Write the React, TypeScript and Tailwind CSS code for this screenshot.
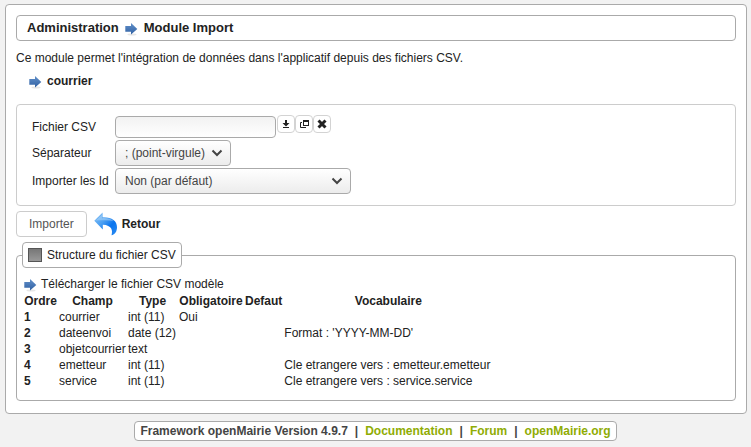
import { ReactNode } from "react";

function ArrowIcon() {
  return (
    <svg width="13" height="16" viewBox="0 0 13 16" className="shrink-0" aria-hidden="true">
      <defs>
        <linearGradient id="arrow-blue" x1="0" y1="0" x2="0" y2="1">
          <stop offset="0" stopColor="#6391ca" />
          <stop offset="1" stopColor="#2f60a2" />
        </linearGradient>
      </defs>
      <ellipse cx="7" cy="14.5" rx="4.5" ry="1" fill="#e6e6e6" />
      <path d="M0.3 6H6V3L12.3 9L6 14.6V11.8H0.3Z" fill="url(#arrow-blue)" />
    </svg>
  );
}

function BackIcon() {
  return (
    <svg width="24" height="24" viewBox="0 0 24 24" className="shrink-0" aria-hidden="true">
      <defs>
        <linearGradient id="back-blue" x1="0" y1="0" x2="1" y2="1">
          <stop offset="0" stopColor="#8cc4f5" />
          <stop offset="0.4" stopColor="#4a9ff2" />
          <stop offset="0.65" stopColor="#0a74ee" />
          <stop offset="1" stopColor="#2d8df2" />
        </linearGradient>
      </defs>
      <path
        d="M0.3 8.8L8.6 0.5V5.2C17.5 4.8 23 8.6 23 15.2C23 19.2 21 22.6 17.5 23.2C19 18.5 17.8 13.2 8.8 12.8V17.6Z"
        fill="url(#back-blue)"
      />
      <path d="M1.8 8.6L8 2.4V6.2C13 5.8 17 6.8 19.5 9C14 7.8 8 8.2 1.8 8.6Z" fill="#b5daf8" opacity="0.5" />
    </svg>
  );
}

function ToolButton({ label, children }: { label: string; children: ReactNode }) {
  return (
    <button
      type="button"
      aria-label={label}
      className="flex h-[18px] w-[18px] items-center justify-center rounded border border-[#d3d3d3] bg-white"
    >
      <svg width="16" height="16" viewBox="0 0 16 16" className="shrink-0" aria-hidden="true">
        {children}
      </svg>
    </button>
  );
}

function SelectField({ id, option, width }: { id: string; option: string; width: string }) {
  return (
    <div className={`relative ${width}`}>
      <select
        id={id}
        className="block h-[26px] w-full appearance-none rounded border border-[#aaa] bg-linear-to-b from-white to-[#ececec] pl-[9px] text-[12px] text-[#444]"
      >
        <option>{option}</option>
      </select>
      <svg
        width="12"
        height="8"
        viewBox="0 0 12 8"
        className="pointer-events-none absolute top-[9px] right-2"
        aria-hidden="true"
      >
        <path d="M1.5 1.5L6 6L10.5 1.5" fill="none" stroke="#444" strokeWidth="2" />
      </svg>
    </div>
  );
}

const columns = [
  { title: "Ordre", width: "w-[33px]" },
  { title: "Champ", width: "w-[67px]" },
  { title: "Type", width: "w-[49px]" },
  { title: "Obligatoire", width: "w-[64px]" },
  { title: "Defaut", width: "w-[37px]" },
  { title: "Vocabulaire", width: "w-[208px]" },
];

const rows = [
  ["1", "courrier", "int (11)", "Oui", "", ""],
  ["2", "dateenvoi", "date (12)", "", "", "Format : 'YYYY-MM-DD'"],
  ["3", "objetcourrier", "text", "", "", ""],
  ["4", "emetteur", "int (11)", "", "", "Cle etrangere vers : emetteur.emetteur"],
  ["5", "service", "int (11)", "", "", "Cle etrangere vers : service.service"],
];

export default function App() {
  return (
    <div className="min-h-screen bg-[#f2f2f2] px-[5px] pt-1 pb-1.5 font-['Liberation_Sans',Arial,sans-serif] text-[12px] leading-[14px] text-[#222]">
      <main className="mr-[-1px] rounded border border-[#aaa] bg-white px-2.5 pt-2.5 pb-3">
        <h1 className="flex h-[26px] items-center gap-1.5 rounded border border-[#aaa] px-2.5 text-[13px] font-bold">
          Administration
          <ArrowIcon />
          Module Import
        </h1>
        <p className="mt-2.5">
          Ce module permet l'intégration de données dans l'applicatif depuis des fichiers CSV.
        </p>
        <h2 className="mt-2 flex h-4 items-center gap-[5px] pl-[13px] font-bold">
          <ArrowIcon />
          courrier
        </h2>

        <form>
          <fieldset className="mt-[15px] rounded border border-[#ccc] pt-[11px] pb-[11px] pl-[15px]">
            <div className="grid grid-cols-[83px_1fr] items-center gap-y-0.5">
              <label htmlFor="fichier">Fichier CSV</label>
              <div className="flex h-[22px] items-start gap-px">
                <input
                  id="fichier"
                  type="text"
                  className="h-[22px] w-[161px] rounded border border-[#aaa] bg-linear-to-b from-[#f2f2f2] to-white px-2 text-[12px]"
                />
                <div className="-mt-px flex">
                  <ToolButton label="Télécharger">
                    <path d="M7 4H9V7H11.5L8 10.5L4.5 7H7ZM5 11H11V12H5Z" fill="#222" />
                  </ToolButton>
                  <ToolButton label="Ouvrir">
                    <path d="M7 4H13V10H7ZM8 6V9H12V6Z" fill="#222" fillRule="evenodd" />
                    <path d="M6 6.5H4.5V11.5H10" fill="none" stroke="#222" />
                  </ToolButton>
                  <ToolButton label="Effacer">
                    <path d="M4.5 4.5L11.5 11.5M11.5 4.5L4.5 11.5" fill="none" stroke="#222" strokeWidth="3" />
                  </ToolButton>
                </div>
              </div>
              <label htmlFor="separateur">Séparateur</label>
              <SelectField id="separateur" option="; (point-virgule)" width="w-[116px]" />
              <label htmlFor="import-id">Importer les Id</label>
              <SelectField id="import-id" option="Non (par défaut)" width="w-[236px]" />
            </div>
          </fieldset>
          <div className="mt-[5px] flex items-center">
            <button type="submit" className="h-[26px] rounded border border-[#ccc] bg-white px-3 text-[#555]">
              Importer
            </button>
            <a href="#" className="ml-[7px] flex items-center gap-1 font-bold">
              <BackIcon />
              Retour
            </a>
          </div>
        </form>

        <fieldset className="mt-[5px] rounded border border-[#aaa] px-[5px] pb-2.5">
          <legend className="rounded border border-[#aaa] bg-white">
            <button type="button" className="flex h-6 items-center gap-[5px] px-[5px]">
              <span className="h-3.5 w-3.5 border border-[#555] bg-linear-to-b from-[#777] to-[#999]" />
              Structure du fichier CSV
            </button>
          </legend>
          <a href="#" className="mt-2 flex h-4 w-fit items-center gap-1 pl-0.5">
            <ArrowIcon />
            Télécharger le fichier CSV modèle
          </a>
          <table className="border-separate border-spacing-0.5">
            <thead>
              <tr>
                {columns.map(({ title, width }) => (
                  <th key={title} scope="col" className={`p-0 text-center font-bold ${width}`}>
                    {title}
                  </th>
                ))}
              </tr>
            </thead>
            <tbody>
              {rows.map(([order, ...cells]) => (
                <tr key={order}>
                  <th scope="row" className="p-0 text-left font-bold">{order}</th>
                  {cells.map((cell, index) => (
                    <td key={index} className="p-0">{cell}</td>
                  ))}
                </tr>
              ))}
            </tbody>
          </table>
        </fieldset>
      </main>

      <footer className="mx-auto mt-[7px] flex h-5 w-fit items-center gap-[7px] rounded border border-[#aaa] bg-white px-[5px] font-bold text-[#444]">
        <span>Framework openMairie Version 4.9.7</span>
        <span>|</span>
        <a href="#" className="text-[#8fac04]">Documentation</a>
        <span>|</span>
        <a href="#" className="text-[#8fac04]">Forum</a>
        <span>|</span>
        <a href="#" className="text-[#8fac04]">openMairie.org</a>
      </footer>
    </div>
  );
}
